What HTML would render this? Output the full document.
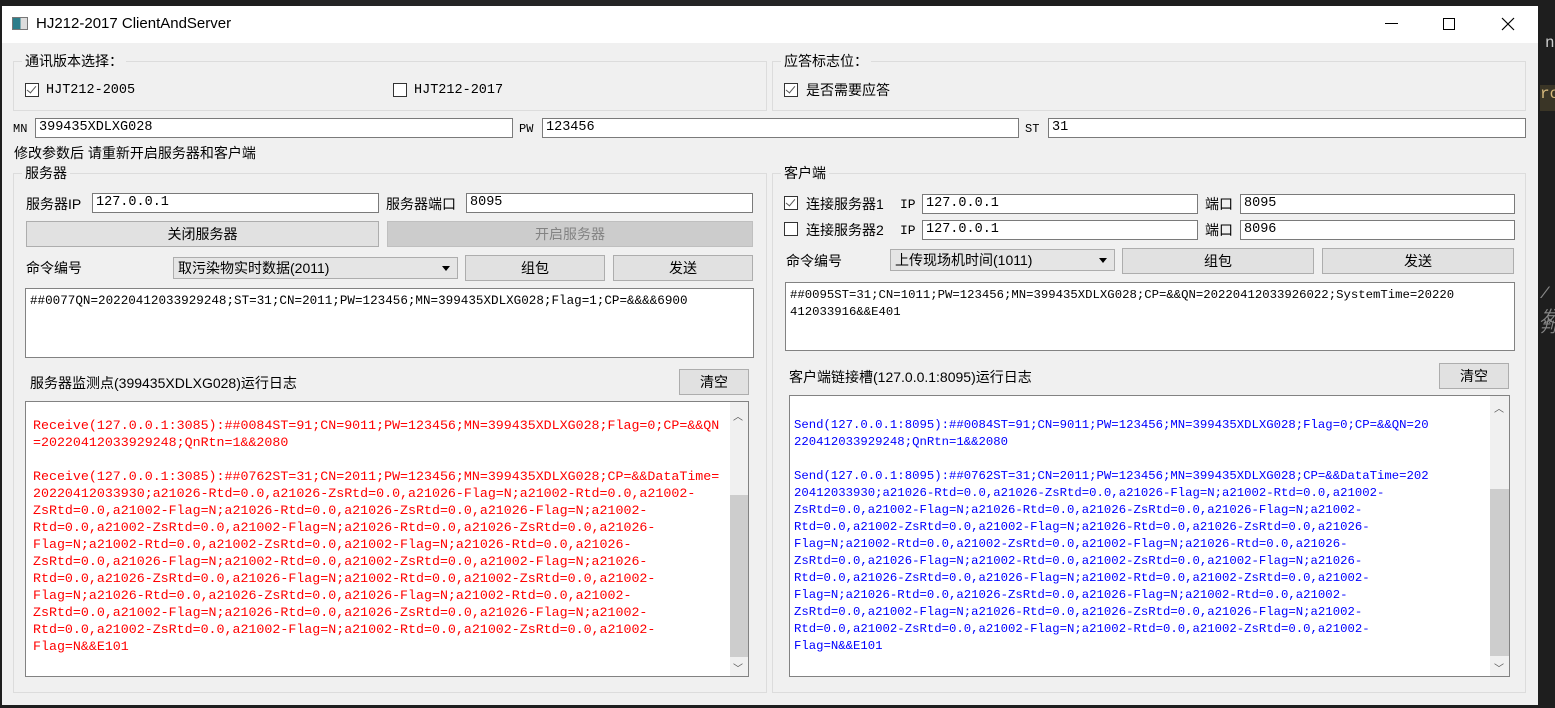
<!DOCTYPE html>
<html><head><meta charset="utf-8"><style>
*{box-sizing:border-box;margin:0;padding:0}
body{width:1555px;height:708px;overflow:hidden;background:#1e1e1e;position:relative;font-family:"Liberation Sans","Noto Sans CJK SC",sans-serif;font-size:14px;color:#000}
.a{position:absolute}
.win{left:2px;top:6px;width:1536px;height:699px;background:#f0f0f0}
.title{left:2px;top:6px;width:1536px;height:37px;background:#fff}
.grp{border:1px solid #dcdcdc}
.lbl{background:#f0f0f0;padding:0 3px;line-height:16px;white-space:nowrap}
.inp{background:#fff;border:1px solid #7a7a7a;height:20px;font-family:"Liberation Mono","Noto Sans CJK SC",monospace;font-size:13.5px;line-height:18px;padding-left:3px;white-space:nowrap;overflow:hidden}
.btn{background:#e1e1e1;border:1px solid #adadad;text-align:center;font-size:14px}
.cb{width:14px;height:14px;border:1px solid #333;background:#fff}
.cb.on::after{content:"";position:absolute;left:3px;top:0px;width:4px;height:8px;border:solid #555;border-width:0 1.5px 1.5px 0;transform:rotate(40deg)}
.t{white-space:nowrap;font-size:14px;line-height:16px}
.mono{font-family:"Liberation Mono","Noto Sans CJK SC",monospace}
.log{background:#fff;border:1px solid #828282;overflow:hidden}
.log pre{font-family:"Liberation Mono",monospace;line-height:17px;position:absolute;white-space:pre}
.sb{background:#f0f0f0}
.combo{background:#e5e5e5;border:1px solid #adadad;font-size:14px;line-height:20px;padding-left:4px;white-space:nowrap}
.combo::after{content:"";position:absolute;right:7px;top:8px;border:4px solid transparent;border-top:5px solid #000}
</style></head><body>
<div class="a" style="left:1545px;top:34px;color:#ccc;font:16px 'Liberation Mono',monospace">nt</div>
<div class="a" style="left:1540px;top:85px;width:15px;height:26px;background:#3a3526;color:#d7ba7d;font:16px 'Liberation Mono',monospace">ro</div>
<div class="a" style="left:1540px;top:285px;color:#888;font:italic 16px 'Liberation Mono',monospace">/ 发</div>
<div class="a" style="left:1540px;top:313px;color:#888;font:italic 16px 'Liberation Mono',monospace">判</div>
<div class="a" style="left:300px;top:0;width:600px;height:6px;background:#252526"></div>
<div class="a win"></div>
<div class="a title"></div>
<div class="a" style="left:12px;top:17px;width:16px;height:13px;border:1px solid #777;background:linear-gradient(90deg,#2c7d8a 55%,#ddd 55%)"></div>
<div class="a" style="left:36px;top:15px;font-size:15px;white-space:nowrap">HJ212-2017 ClientAndServer</div>
<div class="a" style="left:1385px;top:23px;width:13px;height:1px;background:#000"></div>
<div class="a" style="left:1443px;top:18px;width:12px;height:12px;border:1px solid #000"></div>
<svg class="a" style="left:1501px;top:17px" width="14" height="14"><path d="M1 1L13 13M13 1L1 13" stroke="#000" stroke-width="1.2"/></svg>

<div class="a grp" style="left:13px;top:61px;width:754px;height:50px"></div>
<div class="a lbl" style="left:22px;top:53px">通讯版本选择：</div>
<div class="a cb on" style="left:25px;top:83px"></div>
<div class="a t mono" style="left:46px;top:83px;font-size:13.5px">HJT212-2005</div>
<div class="a cb" style="left:393px;top:83px"></div>
<div class="a t mono" style="left:414px;top:83px;font-size:13.5px">HJT212-2017</div>
<div class="a grp" style="left:772px;top:61px;width:754px;height:50px"></div>
<div class="a lbl" style="left:781px;top:53px">应答标志位：</div>
<div class="a cb on" style="left:784px;top:83px"></div>
<div class="a t" style="left:806px;top:82px">是否需要应答</div>

<div class="a t mono" style="left:13px;top:121px;font-size:12px">MN</div>
<div class="a inp" style="left:35px;top:118px;width:478px">399435XDLXG028</div>
<div class="a t mono" style="left:519px;top:121px;font-size:12px">PW</div>
<div class="a inp" style="left:542px;top:118px;width:477px">123456</div>
<div class="a t mono" style="left:1025px;top:121px;font-size:12px">ST</div>
<div class="a inp" style="left:1048px;top:118px;width:478px">31</div>
<div class="a t" style="left:14px;top:145px">修改参数后 请重新开启服务器和客户端</div>

<div class="a grp" style="left:13px;top:173px;width:754px;height:520px"></div>
<div class="a lbl" style="left:22px;top:165px">服务器</div>
<div class="a t" style="left:26px;top:196px">服务器IP</div>
<div class="a inp" style="left:92px;top:193px;width:287px">127.0.0.1</div>
<div class="a t" style="left:386px;top:196px">服务器端口</div>
<div class="a inp" style="left:466px;top:193px;width:287px">8095</div>
<div class="a btn" style="left:26px;top:221px;width:353px;height:26px;line-height:24px">关闭服务器</div>
<div class="a btn" style="left:387px;top:221px;width:366px;height:26px;line-height:24px;background:#cccccc;border-color:#bfbfbf;color:#838383">开启服务器</div>
<div class="a t" style="left:26px;top:260px">命令编号</div>
<div class="a combo" style="left:173px;top:257px;width:285px;height:22px">取污染物实时数据(2011)</div>
<div class="a btn" style="left:465px;top:255px;width:140px;height:26px;line-height:24px">组包</div>
<div class="a btn" style="left:613px;top:255px;width:140px;height:26px;line-height:24px">发送</div>
<div class="a log" style="left:25px;top:288px;width:729px;height:70px"><pre style="left:4px;top:4px;font-size:12.6px">##0077QN=20220412033929248;ST=31;CN=2011;PW=123456;MN=399435XDLXG028;Flag=1;CP=&amp;&amp;&amp;&amp;6900</pre></div>
<div class="a t" style="left:30px;top:375px">服务器监测点(399435XDLXG028)运行日志</div>
<div class="a btn" style="left:679px;top:369px;width:70px;height:26px;line-height:24px">清空</div>
<div class="a log" style="left:25px;top:401px;width:724px;height:276px;color:#f00"><pre style="left:7px;top:15px;font-size:13.3px">Receive(127.0.0.1:3085):##0084ST=91;CN=9011;PW=123456;MN=399435XDLXG028;Flag=0;CP=&amp;&amp;QN
=20220412033929248;QnRtn=1&amp;&amp;2080

Receive(127.0.0.1:3085):##0762ST=31;CN=2011;PW=123456;MN=399435XDLXG028;CP=&amp;&amp;DataTime=
20220412033930;a21026-Rtd=0.0,a21026-ZsRtd=0.0,a21026-Flag=N;a21002-Rtd=0.0,a21002-
ZsRtd=0.0,a21002-Flag=N;a21026-Rtd=0.0,a21026-ZsRtd=0.0,a21026-Flag=N;a21002-
Rtd=0.0,a21002-ZsRtd=0.0,a21002-Flag=N;a21026-Rtd=0.0,a21026-ZsRtd=0.0,a21026-
Flag=N;a21002-Rtd=0.0,a21002-ZsRtd=0.0,a21002-Flag=N;a21026-Rtd=0.0,a21026-
ZsRtd=0.0,a21026-Flag=N;a21002-Rtd=0.0,a21002-ZsRtd=0.0,a21002-Flag=N;a21026-
Rtd=0.0,a21026-ZsRtd=0.0,a21026-Flag=N;a21002-Rtd=0.0,a21002-ZsRtd=0.0,a21002-
Flag=N;a21026-Rtd=0.0,a21026-ZsRtd=0.0,a21026-Flag=N;a21002-Rtd=0.0,a21002-
ZsRtd=0.0,a21002-Flag=N;a21026-Rtd=0.0,a21026-ZsRtd=0.0,a21026-Flag=N;a21002-
Rtd=0.0,a21002-ZsRtd=0.0,a21002-Flag=N;a21002-Rtd=0.0,a21002-ZsRtd=0.0,a21002-
Flag=N&amp;&amp;E101</pre>
<div class="a sb" style="right:0;top:0;width:18px;height:274px"></div>
<div class="a" style="right:0;top:93px;width:18px;height:162px;background:#cdcdcd"></div>
<div class="a" style="right:5px;top:6px;font-size:10px;color:#555">︿</div>
<div class="a" style="right:5px;top:258px;font-size:10px;color:#555">﹀</div>
</div>

<div class="a grp" style="left:772px;top:173px;width:754px;height:520px"></div>
<div class="a lbl" style="left:781px;top:165px">客户端</div>
<div class="a cb on" style="left:784px;top:196px"></div>
<div class="a t" style="left:806px;top:196px">连接服务器1</div>
<div class="a t mono" style="left:900px;top:197px;font-size:13px">IP</div>
<div class="a inp" style="left:922px;top:194px;width:276px">127.0.0.1</div>
<div class="a t" style="left:1205px;top:196px">端口</div>
<div class="a inp" style="left:1240px;top:194px;width:275px">8095</div>
<div class="a cb" style="left:784px;top:222px"></div>
<div class="a t" style="left:806px;top:222px">连接服务器2</div>
<div class="a t mono" style="left:900px;top:223px;font-size:13px">IP</div>
<div class="a inp" style="left:922px;top:220px;width:276px">127.0.0.1</div>
<div class="a t" style="left:1205px;top:222px">端口</div>
<div class="a inp" style="left:1240px;top:220px;width:275px">8096</div>
<div class="a t" style="left:786px;top:253px">命令编号</div>
<div class="a combo" style="left:890px;top:249px;width:225px;height:22px">上传现场机时间(1011)</div>
<div class="a btn" style="left:1122px;top:248px;width:192px;height:26px;line-height:24px">组包</div>
<div class="a btn" style="left:1322px;top:248px;width:192px;height:26px;line-height:24px">发送</div>
<div class="a log" style="left:785px;top:282px;width:730px;height:69px"><pre style="left:4px;top:4px;font-size:12.3px">##0095ST=31;CN=1011;PW=123456;MN=399435XDLXG028;CP=&amp;&amp;QN=20220412033926022;SystemTime=20220
412033916&amp;&amp;E401</pre></div>
<div class="a t" style="left:789px;top:369px">客户端链接槽(127.0.0.1:8095)运行日志</div>
<div class="a btn" style="left:1439px;top:363px;width:70px;height:26px;line-height:24px">清空</div>
<div class="a log" style="left:789px;top:395px;width:721px;height:282px;color:#00f"><pre style="left:4px;top:21px;font-size:12.3px">Send(127.0.0.1:8095):##0084ST=91;CN=9011;PW=123456;MN=399435XDLXG028;Flag=0;CP=&amp;&amp;QN=20
220412033929248;QnRtn=1&amp;&amp;2080

Send(127.0.0.1:8095):##0762ST=31;CN=2011;PW=123456;MN=399435XDLXG028;CP=&amp;&amp;DataTime=202
20412033930;a21026-Rtd=0.0,a21026-ZsRtd=0.0,a21026-Flag=N;a21002-Rtd=0.0,a21002-
ZsRtd=0.0,a21002-Flag=N;a21026-Rtd=0.0,a21026-ZsRtd=0.0,a21026-Flag=N;a21002-
Rtd=0.0,a21002-ZsRtd=0.0,a21002-Flag=N;a21026-Rtd=0.0,a21026-ZsRtd=0.0,a21026-
Flag=N;a21002-Rtd=0.0,a21002-ZsRtd=0.0,a21002-Flag=N;a21026-Rtd=0.0,a21026-
ZsRtd=0.0,a21026-Flag=N;a21002-Rtd=0.0,a21002-ZsRtd=0.0,a21002-Flag=N;a21026-
Rtd=0.0,a21026-ZsRtd=0.0,a21026-Flag=N;a21002-Rtd=0.0,a21002-ZsRtd=0.0,a21002-
Flag=N;a21026-Rtd=0.0,a21026-ZsRtd=0.0,a21026-Flag=N;a21002-Rtd=0.0,a21002-
ZsRtd=0.0,a21002-Flag=N;a21026-Rtd=0.0,a21026-ZsRtd=0.0,a21026-Flag=N;a21002-
Rtd=0.0,a21002-ZsRtd=0.0,a21002-Flag=N;a21002-Rtd=0.0,a21002-ZsRtd=0.0,a21002-
Flag=N&amp;&amp;E101</pre>
<div class="a sb" style="right:0;top:0;width:19px;height:280px"></div>
<div class="a" style="right:0;top:93px;width:19px;height:167px;background:#cdcdcd"></div>
<div class="a" style="right:5px;top:4px;font-size:10px;color:#555">︿</div>
<div class="a" style="right:5px;top:264px;font-size:10px;color:#555">﹀</div>
</div>
</body></html>
